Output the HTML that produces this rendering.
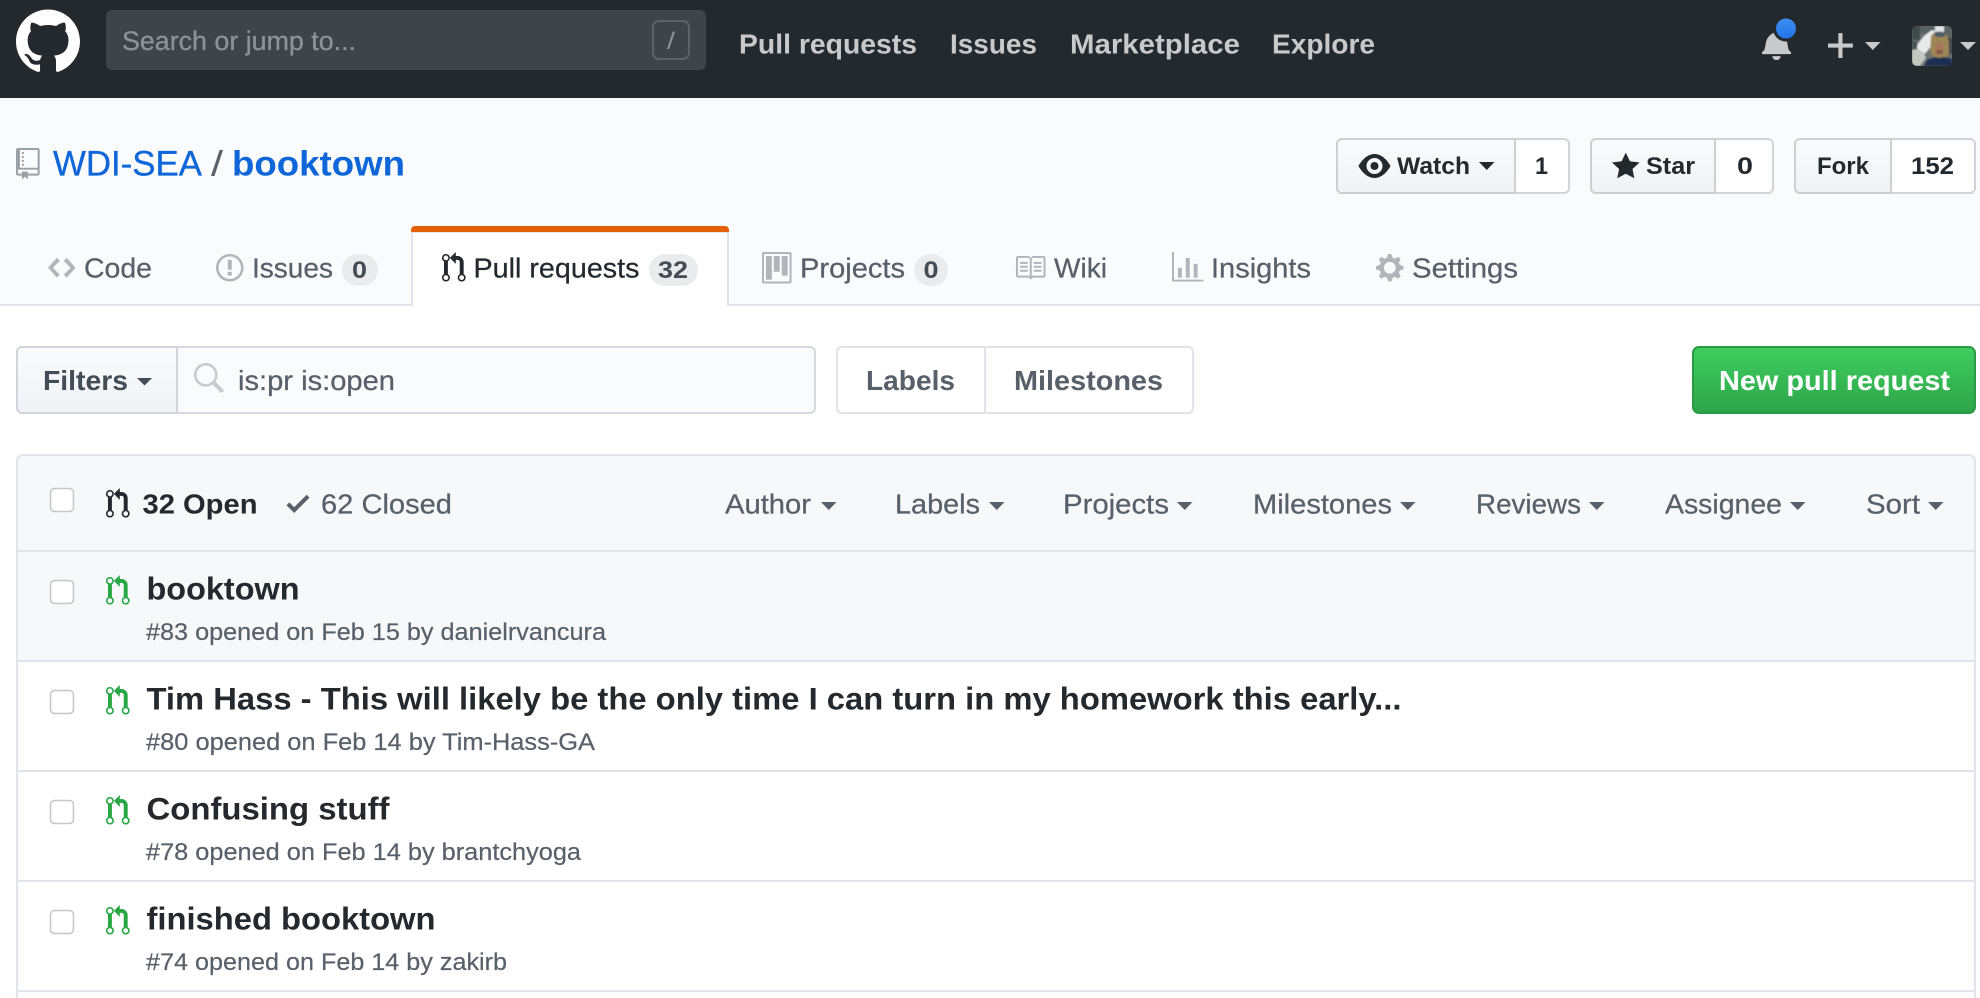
<!DOCTYPE html>
<html lang="en">
<head>
<meta charset="utf-8">
<title>Pull Requests · WDI-SEA/booktown</title>
<style>
html,body{margin:0;padding:0;background:#fff;width:1980px;height:998px;overflow:hidden}
svg{display:block;font-family:"Liberation Sans",Arial,sans-serif}
path{fill-rule:evenodd}
.n{fill:#c8c9cb;font-weight:700;font-size:27.5px}
.tab{fill:#586069;stroke:#586069;stroke-width:.25px;font-size:27.5px}
.cnt{fill:#444d56;font-size:24px;font-weight:700}
.btn{fill:#24292e;font-size:24px;font-weight:700}
.f{fill:#586069;stroke:#586069;stroke-width:.25px;font-size:27.5px}
.t{fill:#24292e;font-size:31.5px;font-weight:700}
.m{fill:#586069;stroke:#586069;stroke-width:.2px;font-size:24px}
.ic{fill:#b1b5b9}
.cb{fill:#fff;stroke:#c4c6c9;stroke-width:1.5}
</style>
</head>
<body>
<svg xmlns="http://www.w3.org/2000/svg" width="1980" height="998" viewBox="0 0 1980 998">
<defs>
<linearGradient id="bg" x1="0" y1="0" x2="0" y2="1"><stop offset="0" stop-color="#fafbfc"/><stop offset="1" stop-color="#eff3f6"/></linearGradient>
<linearGradient id="gr" x1="0" y1="0" x2="0" y2="1"><stop offset="0" stop-color="#3fce5f"/><stop offset="1" stop-color="#2ea44a"/></linearGradient>
<linearGradient id="bl" x1="0" y1="0" x2="0" y2="1"><stop offset="0" stop-color="#3f90f2"/><stop offset="1" stop-color="#2171e6"/></linearGradient>
<clipPath id="av"><rect x="1912" y="26" width="40" height="40" rx="5"/></clipPath>
<filter id="soft" x="-10%" y="-10%" width="120%" height="120%"><feGaussianBlur stdDeviation="0.8"/></filter>
<path id="pr" d="M11 11.28V5c-.03-.78-.34-1.47-.94-2.06C9.46 2.35 8.78 2.03 8 2H7V0L4 3l3 3V4h1c.27.02.48.11.69.31.21.2.3.42.31.69v6.28A1.993 1.993 0 0 0 10 15a1.993 1.993 0 0 0 1-3.72zm-1 2.92c-.66 0-1.2-.55-1.2-1.2 0-.65.55-1.2 1.2-1.2.65 0 1.2.55 1.2 1.2 0 .65-.55 1.2-1.2 1.2zM4 3c0-1.11-.89-2-2-2a1.993 1.993 0 0 0-1 3.72v6.56A1.993 1.993 0 0 0 2 15a1.993 1.993 0 0 0 1-3.72V4.72c.59-.34 1-.98 1-1.72zm-.8 10c0 .66-.55 1.2-1.2 1.2-.65 0-1.2-.55-1.2-1.2 0-.65.55-1.2 1.2-1.2.65 0 1.2.55 1.2 1.2zM2 4.2C1.34 4.2.8 3.65.8 3c0-.65.55-1.2 1.2-1.2.65 0 1.2.55 1.2 1.2 0 .65-.55 1.2-1.2 1.2z"/>
</defs>

<!-- top bar -->
<rect width="1980" height="98" fill="#24292e"/>
<path transform="translate(16 9.5) scale(4)" fill="#fff" d="M8 0C3.58 0 0 3.58 0 8c0 3.54 2.29 6.53 5.47 7.59.4.07.55-.17.55-.38 0-.19-.01-.82-.01-1.49-2.01.37-2.53-.49-2.69-.94-.09-.23-.48-.94-.82-1.13-.28-.15-.68-.52-.01-.53.63-.01 1.08.58 1.23.82.72 1.21 1.87.87 2.33.66.07-.52.28-.87.51-1.07-1.78-.2-3.64-.89-3.64-3.95 0-.87.31-1.59.82-2.15-.08-.2-.36-1.02.08-2.12 0 0 .67-.21 2.2.82.64-.18 1.32-.27 2-.27.68 0 1.36.09 2 .27 1.53-1.04 2.2-.82 2.2-.82.44 1.1.16 1.92.08 2.12.51.56.82 1.27.82 2.15 0 3.07-1.87 3.75-3.65 3.95.29.25.54.73.54 1.48 0 1.07-.01 1.93-.01 2.2 0 .21.15.46.55.38A8.013 8.013 0 0 0 16 8c0-4.42-3.58-8-8-8z"/>
<rect x="106" y="10" width="600" height="60" rx="6" fill="#3f4448"/>
<text x="122" y="50" font-size="27px" fill="#8f9295" stroke="#8f9295" stroke-width=".3" textLength="234" lengthAdjust="spacingAndGlyphs">Search or jump to...</text>
<rect x="653" y="21" width="36" height="38" rx="6" fill="none" stroke="#5e6266" stroke-width="2"/>
<text x="667" y="49" font-size="24px" fill="#8f9295" textLength="8" lengthAdjust="spacingAndGlyphs">/</text>
<text class="n" x="739" y="53.5" textLength="178" lengthAdjust="spacingAndGlyphs">Pull requests</text>
<text class="n" x="950" y="53.5" textLength="87" lengthAdjust="spacingAndGlyphs">Issues</text>
<text class="n" x="1070" y="53.5" textLength="170" lengthAdjust="spacingAndGlyphs">Marketplace</text>
<text class="n" x="1272" y="53.5" textLength="103" lengthAdjust="spacingAndGlyphs">Explore</text>

<path transform="translate(1762 28.5) scale(2.07 1.97)" fill="#c8c9cb" d="M14 12v1H0v-1l.73-.58c.77-.77.81-2.55 1.19-4.42C2.69 3.23 6 2 6 2c0-.55.45-1 1-1s1 .45 1 1c0 0 3.39 1.23 4.16 5 .38 1.88.42 3.66 1.19 4.42l.66.58H14zm-7 4c1.11 0 2-.89 2-2H5c0 1.11.89 2 2 2z"/>
<circle cx="1786" cy="28.5" r="11.5" fill="url(#bl)" stroke="#24292e" stroke-width="3"/>
<path transform="translate(1828 29) scale(2.07)" fill="#c8c9cb" d="M12 9H7v5H5V9H0V7h5V2h2v5h5v2z"/>
<path d="M1865 42h15.5l-7.75 8z" fill="#c8c9cb"/>

<!-- avatar -->
<g clip-path="url(#av)">
<rect x="1912" y="26" width="40" height="40" fill="#6a7272"/>
<g filter="url(#soft)">
<rect x="1912" y="26" width="8" height="14" fill="#3f4a4a"/>
<rect x="1920" y="26" width="16" height="8" fill="#59625f"/>
<path d="M1916 46l8-10 8-6 3 1-3 14-6 8-5 2z" fill="#e8eaea"/>
<path d="M1935 26h9v6h-9z" fill="#e3e6e6"/>
<path d="M1912 40l6 3-2 8-4 2z" fill="#4a5353"/>
<path d="M1912 50l6-1 6 4 2 5-6 8h-8z" fill="#c4c6c0"/>
<path d="M1944 26h8v14h-8z" fill="#5c6462"/>
<path d="M1947 38h5v16h-5z" fill="#3c4546"/>
<path d="M1931 36c3-5 12-6 16-1l2 7 0 12-4 4h-11l-4-6z" fill="#9c8656"/>
<path d="M1934 33c3-2 9-2 12 1l-2 3-8 0z" fill="#4d5a66"/>
<path d="M1935 43c3-2 7-2 9 1l-1 9c-2 3-6 3-8 0z" fill="#a9785c"/>
<path d="M1936 50h7l-1 4h-5z" fill="#7d5a45"/>
<path d="M1924 66l3-6 8-3 4 1 5-1 8 2v7z" fill="#1f2e52"/>
</g>
</g>
<path d="M1960 42h16l-8 8z" fill="#c8c9cb"/>

<!-- repo head -->
<rect y="98" width="1980" height="207" fill="#fafbfc"/>
<path transform="translate(16 148) scale(1.97)" fill="#99a0a6" d="M4 9H3V8h1v1zm0-3H3v1h1V6zm0-2H3v1h1V4zm0-2H3v1h1V2zm8-1v12c0 .55-.45 1-1 1H6v2l-1.5-1.5L3 16v-2H1c-.55 0-1-.45-1-1V1c0-.55.45-1 1-1h10c.55 0 1 .45 1 1zm-1 10H1v2h2v-1h3v1h5v-2zm0-10H2v9h9V1z"/>
<text x="53" y="175.5" font-size="35px" fill="#0f66d8" stroke="#0f66d8" stroke-width=".3" textLength="149" lengthAdjust="spacingAndGlyphs">WDI-SEA</text>
<text x="211" y="175.5" font-size="35px" fill="#586069" textLength="12" lengthAdjust="spacingAndGlyphs">/</text>
<text x="232" y="175.5" font-size="35px" font-weight="700" fill="#0f66d8" textLength="173" lengthAdjust="spacingAndGlyphs">booktown</text>

<!-- Watch -->
<rect x="1337" y="139" width="232" height="54" rx="5" fill="#fff" stroke="#d1d5da" stroke-width="2"/>
<path d="M1515 139h-173a5 5 0 0 0-5 5v44a5 5 0 0 0 5 5h173z" fill="url(#bg)" stroke="#cdd0d3" stroke-width="2"/>
<path transform="translate(1358.5 150) scale(2)" fill="#24292e" d="M8.06 2C3 2 0 8 0 8s3 6 8.06 6C13 14 16 8 16 8s-3-6-7.94-6zM8 12c-2.2 0-4-1.78-4-4 0-2.2 1.8-4 4-4 2.22 0 4 1.8 4 4 0 2.22-1.78 4-4 4zm2-4c0 1.11-.89 2-2 2-1.11 0-2-.89-2-2 0-1.11.89-2 2-2 1.11 0 2 .89 2 2z"/>
<text class="btn" x="1397" y="174" textLength="73" lengthAdjust="spacingAndGlyphs">Watch</text>
<path d="M1479 162h15.500l-7.750 8z" fill="#24292e"/>
<text class="btn" x="1535" y="174" textLength="13" lengthAdjust="spacingAndGlyphs">1</text>
<!-- Star -->
<rect x="1591" y="139" width="182" height="54" rx="5" fill="#fff" stroke="#d1d5da" stroke-width="2"/>
<path d="M1715 139h-119a5 5 0 0 0-5 5v44a5 5 0 0 0 5 5h119z" fill="url(#bg)" stroke="#cdd0d3" stroke-width="2"/>
<path transform="translate(1612 150.700) scale(1.97)" fill="#24292e" d="M14 6l-4.900-.64L7 1 4.900 5.360 0 6l3.600 3.260L2.670 14 7 11.670 11.330 14l-.93-4.740L14 6z"/>
<text class="btn" x="1646" y="174" textLength="49" lengthAdjust="spacingAndGlyphs">Star</text>
<text class="btn" x="1737" y="174" textLength="16" lengthAdjust="spacingAndGlyphs">0</text>
<!-- Fork -->
<rect x="1795" y="139" width="180" height="54" rx="5" fill="#fff" stroke="#d1d5da" stroke-width="2"/>
<path d="M1891 139h-91a5 5 0 0 0-5 5v44a5 5 0 0 0 5 5h91z" fill="url(#bg)" stroke="#cdd0d3" stroke-width="2"/>
<text class="btn" x="1817" y="174" textLength="52" lengthAdjust="spacingAndGlyphs">Fork</text>
<text class="btn" x="1911" y="174" textLength="43" lengthAdjust="spacingAndGlyphs">152</text>

<!-- tabs -->
<rect y="304" width="1980" height="2" fill="#e1e4e8"/>
<path d="M412 306V232h316v74" fill="#fff" stroke="#e1e4e8" stroke-width="2"/>
<rect x="413" y="304" width="314" height="3" fill="#fff"/>
<path d="M411 232v-2a4 4 0 0 1 4-4h310a4 4 0 0 1 4 4v2z" fill="#e36209"/>

<path class="ic" transform="translate(48 252) scale(1.97)" d="M9.500 3L8 4.500 11.500 8 8 11.500 9.500 13 14 8 9.500 3zm-5 0L0 8l4.500 5L6 11.500 2.500 8 6 4.500 4.500 3z"/>
<text class="tab" x="84" y="277.500" textLength="68" lengthAdjust="spacingAndGlyphs">Code</text>

<path class="ic" transform="translate(216 252) scale(1.97)" d="M7 2.300c3.140 0 5.700 2.560 5.700 5.700s-2.560 5.700-5.700 5.700A5.710 5.710 0 0 1 1.300 8c0-3.140 2.560-5.700 5.700-5.700zM7 1C3.140 1 0 4.140 0 8s3.140 7 7 7 7-3.140 7-7-3.140-7-7-7zm1 3H6v5h2V4zm0 6H6v2h2v-2z"/>
<text class="tab" x="252" y="277.500" textLength="81" lengthAdjust="spacingAndGlyphs">Issues</text>
<rect x="342" y="254" width="36" height="32" rx="16" fill="#e9ebed"/>
<text class="cnt" x="352" y="278" textLength="15" lengthAdjust="spacingAndGlyphs">0</text>

<use href="#pr" transform="translate(442 252) scale(1.97)" fill="#24292e"/>
<text class="tab" style="fill:#24292e;stroke:#24292e" x="473.500" y="277.500" textLength="166" lengthAdjust="spacingAndGlyphs">Pull requests</text>
<rect x="649" y="254" width="49" height="32" rx="16" fill="#e9ebed"/>
<text class="cnt" x="658" y="278" textLength="30" lengthAdjust="spacingAndGlyphs">32</text>

<path class="ic" transform="translate(762 252) scale(1.97)" d="M10 12h3V2h-3v10zm-4-2h3V2H6v8zm-4 4h3V2H2v12zm-1 1h13V1H1v14zM14 0H1a1 1 0 0 0-1 1v14a1 1 0 0 0 1 1h13a1 1 0 0 0 1-1V1a1 1 0 0 0-1-1z"/>
<text class="tab" x="800" y="277.500" textLength="105" lengthAdjust="spacingAndGlyphs">Projects</text>
<rect x="914" y="254" width="34" height="32" rx="16" fill="#e9ebed"/>
<text class="cnt" x="923.500" y="278" textLength="15" lengthAdjust="spacingAndGlyphs">0</text>

<path class="ic" transform="translate(1014 252) scale(1.97)" d="M3 5h4v1H3V5zm0 3h4V7H3v1zm0 2h4V9H3v1zm11-5h-4v1h4V5zm0 2h-4v1h4V7zm0 2h-4v1h4V9zm2-6v9c0 .55-.45 1-1 1H9.500l-1 1-1-1H2c-.55 0-1-.45-1-1V3c0-.55.45-1 1-1h5.500l1 1 1-1H15c.55 0 1 .45 1 1zm-8 .5L7.500 3H2v9h6V3.500zm7-.5H9.500l-.5.5V12h6V3z"/>
<text class="tab" x="1054" y="277.500" textLength="53" lengthAdjust="spacingAndGlyphs">Wiki</text>

<path class="ic" transform="translate(1172 252) scale(1.97)" d="M16 14v1H0V0h1v14h15zM5 13H3V8h2v5zm4 0H7V3h2v10zm4 0h-2V6h2v7z"/>
<text class="tab" x="1211" y="277.500" textLength="100" lengthAdjust="spacingAndGlyphs">Insights</text>

<path class="ic" transform="translate(1376 252) scale(1.97)" d="M14 8.770v-1.600l-1.940-.64-.45-1.090.88-1.840-1.130-1.130-1.810.91-1.090-.45-.69-1.920h-1.600l-.63 1.940-1.110.45-1.840-.88-1.130 1.130.91 1.810-.45 1.090L0 7.230v1.590l1.940.64.45 1.090-.88 1.840 1.130 1.130 1.810-.91 1.090.45.69 1.920h1.590l.63-1.940 1.110-.45 1.840.88 1.130-1.130-.92-1.810.47-1.090L14 8.750v.02zM7 11c-1.660 0-3-1.340-3-3s1.340-3 3-3 3 1.340 3 3-1.340 3-3 3z"/>
<text class="tab" x="1412" y="277.500" textLength="106" lengthAdjust="spacingAndGlyphs">Settings</text>

<!-- filters -->
<rect x="170" y="347" width="645" height="66" rx="5" fill="#fafbfc" stroke="#d5d8dc" stroke-width="2"/>
<path d="M177 347H22a5 5 0 0 0-5 5v56a5 5 0 0 0 5 5h155z" fill="url(#bg)" stroke="#d1d4d8" stroke-width="2"/>
<text x="43" y="390" font-size="27.500px" font-weight="700" fill="#444d56" textLength="85" lengthAdjust="spacingAndGlyphs">Filters</text>
<path d="M137 378h15l-7.500 7.500z" fill="#444d56"/>
<path transform="translate(192 363) scale(1.97)" fill="#c6cbd0" d="M15.700 13.300l-3.810-3.830A5.930 5.930 0 0 0 13 6c0-3.310-2.690-6-6-6S1 2.690 1 6s2.690 6 6 6c1.300 0 2.480-.41 3.470-1.110l3.830 3.810c.19.2.45.3.7.3.25 0 .52-.09.7-.3a.996.996 0 0 0 0-1.400V13.300zM7 10.700c-2.590 0-4.700-2.110-4.700-4.700 0-2.590 2.110-4.700 4.700-4.700 2.590 0 4.700 2.110 4.700 4.700 0 2.590-2.110 4.700-4.700 4.700z"/>
<text class="f" x="238" y="390" textLength="157" lengthAdjust="spacingAndGlyphs">is:pr is:open</text>

<rect x="837" y="347" width="356" height="66" rx="5" fill="#fff" stroke="#e1e4e8" stroke-width="2"/>
<rect x="984" y="347" width="2" height="66" fill="#e1e4e8"/>
<text x="866" y="390" font-size="27.500px" font-weight="700" fill="#586069" textLength="89" lengthAdjust="spacingAndGlyphs">Labels</text>
<text x="1014" y="390" font-size="27.500px" font-weight="700" fill="#586069" textLength="149" lengthAdjust="spacingAndGlyphs">Milestones</text>

<rect x="1693" y="347" width="282" height="66" rx="6" fill="url(#gr)" stroke="#2b9a45" stroke-width="2"/>
<text x="1719" y="390" font-size="27.500px" font-weight="700" fill="#fff" textLength="231" lengthAdjust="spacingAndGlyphs">New pull request</text>

<!-- list -->
<path d="M17 998V461a6 6 0 0 1 6-6h1946a6 6 0 0 1 6 6v537" fill="#fff" stroke="#e1e4e8" stroke-width="2"/>
<path d="M18 552V461a5 5 0 0 1 5-5h1946a5 5 0 0 1 5 5v91z" fill="#f6f8fa"/>
<rect x="18" y="552" width="1956" height="108" fill="#f6f8fa"/>
<rect x="18" y="550" width="1956" height="2" fill="#e1e4e8"/>
<rect x="18" y="660" width="1956" height="2" fill="#e1e4e8"/>
<rect x="18" y="770" width="1956" height="2" fill="#e1e4e8"/>
<rect x="18" y="880" width="1956" height="2" fill="#e1e4e8"/>
<rect x="18" y="990" width="1956" height="2" fill="#e1e4e8"/>

<rect class="cb" x="50.500" y="488.500" width="23" height="23" rx="4"/>
<use href="#pr" transform="translate(106 488) scale(1.97)" fill="#24292e"/>
<text x="142.500" y="513.500" font-size="27.500px" font-weight="700" fill="#24292e" textLength="115" lengthAdjust="spacingAndGlyphs">32 Open</text>
<path transform="translate(286.500 488) scale(1.92)" fill="#586069" d="M12 5l-8 8-4-4 1.500-1.500L4 10l6.500-6.500L12 5z"/>
<text class="f" x="321" y="513.500" textLength="131" lengthAdjust="spacingAndGlyphs">62 Closed</text>

<text class="f" x="725" y="513.500" textLength="86" lengthAdjust="spacingAndGlyphs">Author</text>
<path d="M821 502h15.500l-7.750 8z" fill="#586069"/>
<text class="f" x="895" y="513.500" textLength="85" lengthAdjust="spacingAndGlyphs">Labels</text>
<path d="M989 502h15.500l-7.750 8z" fill="#586069"/>
<text class="f" x="1063" y="513.500" textLength="106" lengthAdjust="spacingAndGlyphs">Projects</text>
<path d="M1177 502h15.500l-7.750 8z" fill="#586069"/>
<text class="f" x="1253" y="513.500" textLength="139" lengthAdjust="spacingAndGlyphs">Milestones</text>
<path d="M1400 502h15.500l-7.750 8z" fill="#586069"/>
<text class="f" x="1476" y="513.500" textLength="105" lengthAdjust="spacingAndGlyphs">Reviews</text>
<path d="M1589 502h15.500l-7.750 8z" fill="#586069"/>
<text class="f" x="1665" y="513.500" textLength="117" lengthAdjust="spacingAndGlyphs">Assignee</text>
<path d="M1790 502h15.500l-7.750 8z" fill="#586069"/>
<text class="f" x="1866" y="513.500" textLength="54" lengthAdjust="spacingAndGlyphs">Sort</text>
<path d="M1928 502h15.500l-7.750 8z" fill="#586069"/>

<!-- rows -->
<rect class="cb" x="50.500" y="580.500" width="23" height="23" rx="4"/>
<use href="#pr" transform="translate(106 575) scale(1.97)" fill="#28a745"/>
<text class="t" x="146.500" y="599.500" textLength="153" lengthAdjust="spacingAndGlyphs">booktown</text>
<text class="m" x="146" y="640" textLength="460" lengthAdjust="spacingAndGlyphs">#83 opened on Feb 15 by danielrvancura</text>

<rect class="cb" x="50.500" y="690.500" width="23" height="23" rx="4"/>
<use href="#pr" transform="translate(106 685) scale(1.97)" fill="#28a745"/>
<text class="t" x="146.500" y="709.500" textLength="1255" lengthAdjust="spacingAndGlyphs">Tim Hass - This will likely be the only time I can turn in my homework this early...</text>
<text class="m" x="146" y="750" textLength="449" lengthAdjust="spacingAndGlyphs">#80 opened on Feb 14 by Tim-Hass-GA</text>

<rect class="cb" x="50.500" y="800.500" width="23" height="23" rx="4"/>
<use href="#pr" transform="translate(106 795) scale(1.97)" fill="#28a745"/>
<text class="t" x="146.500" y="819.500" textLength="243" lengthAdjust="spacingAndGlyphs">Confusing stuff</text>
<text class="m" x="146" y="860" textLength="435" lengthAdjust="spacingAndGlyphs">#78 opened on Feb 14 by brantchyoga</text>

<rect class="cb" x="50.500" y="910.500" width="23" height="23" rx="4"/>
<use href="#pr" transform="translate(106 905) scale(1.97)" fill="#28a745"/>
<text class="t" x="146.500" y="929.500" textLength="289" lengthAdjust="spacingAndGlyphs">finished booktown</text>
<text class="m" x="146" y="970" textLength="361" lengthAdjust="spacingAndGlyphs">#74 opened on Feb 14 by zakirb</text>
</svg>
</body>
</html>
